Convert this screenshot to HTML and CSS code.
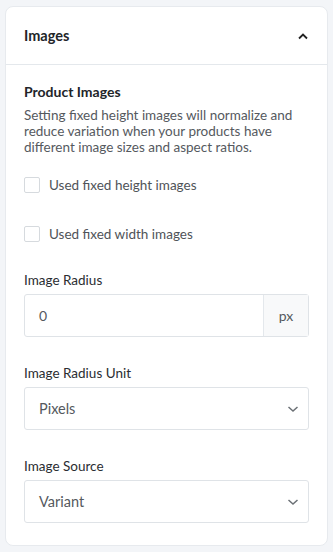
FILE: index.html
```html
<!DOCTYPE html>
<html lang="en">

<head>
    <meta charset="UTF-8">
    <title>Images</title>
    <link rel="stylesheet" href="styles.css">
</head>

<body>
    <div class="panel">
        <div class="panel-header">
            <span class="panel-title">Images</span>
            <svg class="toggle" width="12" height="8" viewBox="0 0 12 8">
                <path d="M2 6.5 L6 2.5 L10 6.5" fill="none" stroke="#222" stroke-width="1.8" />
            </svg>
        </div>
        <div class="panel-body">
            <div class="section-title">Product Images</div>
            <p class="hint">Setting fixed height images will normalize and reduce variation when your products have different image sizes and aspect ratios.</p>

            <label class="check first">
                <span class="box"></span>
                <span>Used fixed height images</span>
            </label>
            <label class="check">
                <span class="box"></span>
                <span>Used fixed width images</span>
            </label>

            <div class="field-label">Image Radius</div>
            <div class="input-group">
                <div class="input">0</div>
                <div class="addon">px</div>
            </div>

            <div class="field-label">Image Radius Unit</div>
            <div class="select">
                <span>Pixels</span>
                <svg width="12" height="8" viewBox="0 0 12 8">
                    <path d="M1.5 2 L6 6 L10.5 2" fill="none" stroke="#6b7075" stroke-width="1.5" />
                </svg>
            </div>

            <div class="field-label">Image Source</div>
            <div class="select">
                <span>Variant</span>
                <svg width="12" height="8" viewBox="0 0 12 8">
                    <path d="M1.5 2 L6 6 L10.5 2" fill="none" stroke="#6b7075" stroke-width="1.5" />
                </svg>
            </div>
        </div>
    </div>
</body>

</html>
```

FILE: styles.css
```css
html, body {
    margin: 0;
    padding: 0;
    background: #f3f5f8;
    font-family: "Lato", "Noto Sans", sans-serif;
    color: #222529;
}
.panel {
    margin: 6px 5px 0 5px;
    background: #ffffff;
    border: 1px solid #e7eaee;
    border-radius: 8px;
    box-sizing: border-box;
}
.panel-header {
    height: 58px;
    padding: 0 18px;
    display: flex;
    align-items: center;
    justify-content: space-between;
    border-bottom: 1px solid #e4e8ec;
    box-sizing: border-box;
}
.panel-title {
    font-size: 14.5px;
    font-weight: bold;
}
.panel-body {
    padding: 18px 18px 22px 18px;
    display: flex;
    flex-direction: column;
}
.section-title {
    font-size: 14px;
    font-weight: bold;
    line-height: 18px;
}
.hint {
    margin: 6px 0 0 0;
    font-size: 13.5px;
    line-height: 16px;
    color: #55595e;
}
.check {
    display: flex;
    align-items: center;
    gap: 9px;
    height: 20px;
    margin-top: 29px;
    font-size: 13.5px;
    color: #4f5358;
}
.check.first {
    margin-top: 20px;
}
.box {
    width: 14px;
    height: 14px;
    border: 1px solid #d6dade;
    border-radius: 2px;
}
.field-label {
    margin-top: 27px;
    font-size: 13.5px;
    line-height: 18px;
    color: #2a2d31;
}
.input-group {
    margin-top: 5px;
    display: flex;
    height: 43px;
    border: 1px solid #dfe3e7;
    border-radius: 3px;
    box-sizing: border-box;
}
.input {
    flex: 1;
    display: flex;
    align-items: center;
    padding-left: 14px;
    font-size: 14px;
    color: #55595e;
}
.addon {
    width: 44px;
    display: flex;
    align-items: center;
    justify-content: center;
    border-left: 1px solid #e4e8ec;
    background: #f8f9fa;
    font-size: 14px;
    color: #55595e;
}
.select {
    margin-top: 5px;
    height: 43px;
    display: flex;
    align-items: center;
    justify-content: space-between;
    padding: 0 9px 0 14px;
    border: 1px solid #dfe3e7;
    border-radius: 3px;
    box-sizing: border-box;
    font-size: 14.5px;
    color: #55595e;
}
```
